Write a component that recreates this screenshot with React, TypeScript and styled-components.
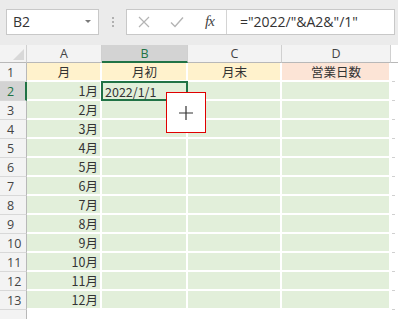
import React from "react";
import styled, { createGlobalStyle } from "styled-components";

const Global = createGlobalStyle`
  html, body { margin: 0; padding: 0; background: #ffffff; }
  #root { width: 398px; height: 319px; overflow: hidden; }
`;

const Page = styled.div`
  width: 398px;
  height: 319px;
  background: #ffffff;
  overflow: hidden;
  font-family: "Noto Sans CJK JP", "Noto Sans", sans-serif;
`;

const Toolbar = styled.div`
  height: 45px;
  background: #ebebeb;
  display: flex;
  align-items: center;
  padding: 0 3px 2px 6px;
  box-sizing: border-box;
`;

const NameBox = styled.div`
  width: 93px;
  height: 26px;
  box-sizing: border-box;
  background: #ffffff;
  border: 1px solid #c8c8c8;
  display: flex;
  align-items: center;
  justify-content: space-between;
  padding: 0 6px 0 6px;
  font-family: "Open Sans", "Noto Sans", sans-serif;
  font-size: 14px;
  color: #333333;
`;

const Caret = styled.span`
  width: 0;
  height: 0;
  border-left: 3px solid transparent;
  border-right: 3px solid transparent;
  border-top: 3px solid #7a7a7a;
  margin-right: 1px;
`;

const Dots = styled.div`
  width: 27px;
  display: flex;
  flex-direction: column;
  align-items: center;
  gap: 2px;
  span {
    width: 2px;
    height: 2px;
    background: #b0b0b0;
  }
`;

const FormulaBox = styled.div`
  flex: 1;
  height: 26px;
  box-sizing: border-box;
  background: #ffffff;
  border: 1px solid #c8c8c8;
  display: flex;
  align-items: center;
`;

const IconSlot = styled.div<{ $w: number }>`
  width: ${(p) => p.$w}px;
  height: 100%;
  display: flex;
  align-items: center;
  justify-content: center;
`;

const Fx = styled.span`
  font-family: "Liberation Serif", serif;
  font-style: italic;
  font-size: 15px;
  color: #444444;
  letter-spacing: -1px;
`;

const Divider = styled.div`
  width: 1px;
  height: 100%;
  background: #d4d4d4;
`;

const FormulaText = styled.div`
  padding-left: 13px;
  font-family: "Open Sans", "Noto Sans", sans-serif;
  font-size: 14px;
  color: #333333;
  white-space: nowrap;
`;

const GridWrap = styled.div`
  position: relative;
`;

const Grid = styled.div`
  display: grid;
  grid-template-columns: 27px 75px 86px 94px 109px 7px;
  grid-template-rows: 18px repeat(13, 19px) 9px;
`;

const Corner = styled.div`
  background: #f3f3f3;
  border-right: 1px solid #d0d0d0;
  border-bottom: 1px solid #b8b8b8;
  box-sizing: border-box;
  position: relative;
  overflow: hidden;
  &::after {
    content: "";
    position: absolute;
    right: 2px;
    bottom: 2px;
    width: 0;
    height: 0;
    border-left: 11px solid transparent;
    border-bottom: 11px solid #d8d8d8;
  }
`;

const ColHead = styled.div<{ $active?: boolean }>`
  background: ${(p) => (p.$active ? "#d3d3d3" : "#f3f3f3")};
  border-right: 1px solid #d0d0d0;
  border-bottom: ${(p) => (p.$active ? "2px solid #217346" : "1px solid #b8b8b8")};
  box-sizing: border-box;
  display: flex;
  align-items: center;
  justify-content: center;
  font-family: "Open Sans", "Noto Sans", sans-serif;
  font-size: 12.5px;
  color: ${(p) => (p.$active ? "#217346" : "#444444")};
`;

const ColTail = styled.div`
  background: #ffffff;
  border-bottom: 1px solid #b8b8b8;
  box-sizing: border-box;
`;

const RowHead = styled.div<{ $active?: boolean }>`
  background: ${(p) => (p.$active ? "#d3d3d3" : "#f3f3f3")};
  border-right: ${(p) => (p.$active ? "2px solid #217346" : "1px solid #b8b8b8")};
  border-bottom: 1px solid #d8d8d8;
  box-sizing: border-box;
  display: flex;
  align-items: center;
  padding-left: 7px;
  font-family: "Open Sans", "Noto Sans", sans-serif;
  font-size: 12.5px;
  color: ${(p) => (p.$active ? "#217346" : "#444444")};
`;

const RowFoot = styled.div`
  background: #f3f3f3;
  border-right: 1px solid #b8b8b8;
  box-sizing: border-box;
`;

const Cell = styled.div<{ $fill: string; $align?: string }>`
  background: ${(p) => p.$fill};
  border-right: 2px solid #ffffff;
  border-bottom: 2px solid #ffffff;
  box-sizing: border-box;
  display: flex;
  align-items: center;
  justify-content: ${(p) => p.$align || "flex-start"};
  padding: 0 2px 0 3px;
  font-size: 12.5px;
  color: #333333;
  white-space: nowrap;
`;

const SelectedCell = styled.div`
  background: #e2efda;
  border: 2px solid #217346;
  margin: -1px 0 0 -1px;
  box-sizing: border-box;
  display: flex;
  align-items: center;
  padding: 0 2px;
  font-size: 12.5px;
  color: #333333;
  white-space: nowrap;
  position: relative;
  z-index: 1;
`;

const Tick = styled.div`
  background: #ffffff;
  position: relative;
  &::after {
    content: "";
    position: absolute;
    left: 1px;
    bottom: 0;
    width: 3px;
    height: 1px;
    background: #d0d0d0;
  }
`;

const Blank = styled.div`
  background: #ffffff;
`;

const Popup = styled.div`
  position: absolute;
  left: 166px;
  top: 47px;
  width: 40px;
  height: 41px;
  box-sizing: border-box;
  background: #ffffff;
  border: 1px solid #e00000;
  display: flex;
  align-items: center;
  justify-content: center;
  z-index: 2;
`;

const months = Array.from({ length: 12 }, (_, i) => `${i + 1}月`);

export default function App() {
  const GREEN = "#e2efda";
  const CREAM = "#fff2cc";
  const PINK = "#fce4d6";
  return (
    <Page>
      <Global />
      <Toolbar>
        <NameBox>
          <span>B2</span>
          <Caret />
        </NameBox>
        <Dots>
          <span />
          <span />
          <span />
        </Dots>
        <FormulaBox>
          <IconSlot $w={34}>
            <svg width="12" height="12" viewBox="0 0 12 12">
              <path d="M1 1 L11 11 M11 1 L1 11" stroke="#b4b4b4" strokeWidth="1.2" fill="none" />
            </svg>
          </IconSlot>
          <IconSlot $w={32}>
            <svg width="14" height="12" viewBox="0 0 14 12">
              <path d="M1 6.5 L5 10.5 L13 1.5" stroke="#b4b4b4" strokeWidth="1.4" fill="none" />
            </svg>
          </IconSlot>
          <IconSlot $w={33}>
            <Fx>fx</Fx>
          </IconSlot>
          <Divider />
          <FormulaText>="2022/"&amp;A2&amp;"/1"</FormulaText>
        </FormulaBox>
      </Toolbar>
      <GridWrap>
        <Grid>
          <Corner />
          <ColHead>A</ColHead>
          <ColHead $active>B</ColHead>
          <ColHead>C</ColHead>
          <ColHead>D</ColHead>
          <ColTail />

          <RowHead>1</RowHead>
          <Cell $fill={CREAM} $align="center">月</Cell>
          <Cell $fill={CREAM} $align="center">月初</Cell>
          <Cell $fill={CREAM} $align="center">月末</Cell>
          <Cell $fill={PINK} $align="center">営業日数</Cell>
          <Tick />

          {months.map((m, i) => (
            <React.Fragment key={m}>
              <RowHead $active={i === 0}>{i + 2}</RowHead>
              <Cell $fill={GREEN} $align="flex-end">{m}</Cell>
              {i === 0 ? (
                <SelectedCell>2022/1/1</SelectedCell>
              ) : (
                <Cell $fill={GREEN} />
              )}
              <Cell $fill={GREEN} />
              <Cell $fill={GREEN} />
              <Tick />
            </React.Fragment>
          ))}

          <RowFoot />
          <Blank />
          <Blank />
          <Blank />
          <Blank />
          <Blank />
        </Grid>
        <Popup>
          <svg width="14" height="14" viewBox="0 0 14 14">
            <path d="M7 0 V14 M0 7 H14" stroke="#333333" strokeWidth="1.2" fill="none" />
          </svg>
        </Popup>
      </GridWrap>
    </Page>
  );
}
